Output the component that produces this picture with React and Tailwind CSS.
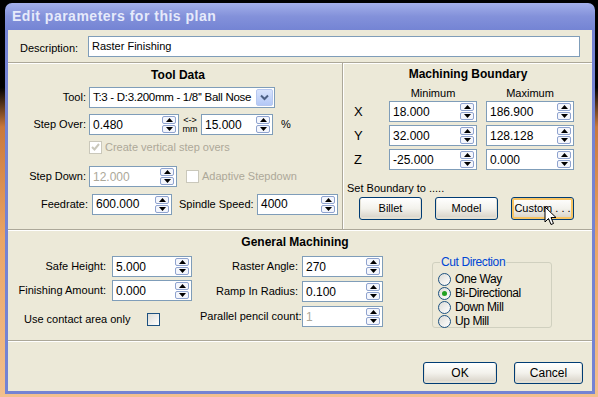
import React from 'react'

const font = "font-['Liberation_Sans',Arial,sans-serif]"

function Tri({ down }) {
  return (
    <svg width="7" height="4" viewBox="0 0 7 4">
      <path d={down ? 'M0 0H7L3.5 4Z' : 'M3.5 0L7 4H0Z'} fill="#000" />
    </svg>
  )
}

function Spinner() {
  return (
    <div className="flex flex-col gap-px mr-[2px]">
      <span className="w-[14px] h-[8px] rounded-[2px] border border-[#8fa3cf] bg-[#f4f6fc] flex items-center justify-center">
        <Tri />
      </span>
      <span className="w-[14px] h-[8px] rounded-[2px] border border-[#8fa3cf] bg-[#f4f6fc] flex items-center justify-center">
        <Tri down />
      </span>
    </div>
  )
}

function SpinBox({ value, className = '', disabled }) {
  return (
    <div className={'h-[21px] shrink-0 flex items-center bg-white border border-[#7f9db9] ' + className}>
      <span className={'flex-1 min-w-0 pl-[3px] text-[12px] ' + (disabled ? 'text-[#aca899]' : 'text-black')}>{value}</span>
      <Spinner />
    </div>
  )
}

function Check({ checked, disabled }) {
  return (
    <span
      className={
        'w-[13px] h-[13px] shrink-0 border flex items-center justify-center ' +
        (disabled
          ? 'border-[#cac8bb] bg-white'
          : 'border-[#1c5180] bg-gradient-to-br from-[#dcdcd7] to-white')
      }
    >
      {checked && (
        <svg width="9" height="8" viewBox="0 0 9 8">
          <path d="M1 4L3.5 6.5L8 1" stroke={disabled ? '#cac8bb' : '#21a121'} strokeWidth="2" fill="none" />
        </svg>
      )}
    </span>
  )
}

function Radio({ checked, label }) {
  return (
    <div className="flex items-center h-[14px] gap-[4px]">
      <span className="w-[13px] h-[13px] rounded-full border border-[#1c5180] bg-gradient-to-br from-[#dcdcd7] to-white flex items-center justify-center">
        {checked && <span className="w-[5px] h-[5px] rounded-full bg-[#21a121]" />}
      </span>
      <span className="text-[12px] tracking-[-0.4px]">{label}</span>
    </div>
  )
}

function XpButton({ children, className = '', hot }) {
  return (
    <div
      className={
        'h-[23px] rounded-[3px] border border-[#003c74] bg-gradient-to-b from-white via-[#f3f2ec] to-[#d6d0c5] flex items-center justify-center ' +
        (hot ? 'shadow-[inset_0_0_0_2px_#f7c463] ' : 'shadow-[inset_0_-1px_0_1px_#e3e0d4] ') +
        className
      }
    >
      {children}
    </div>
  )
}

function Label({ children, className = '' }) {
  return <span className={'text-right shrink-0 ' + className}>{children}</span>
}

export default function App() {
  return (
    <div className={'w-[598px] h-[397px] overflow-hidden pl-[5px] pt-[3px] relative bg-[linear-gradient(to_bottom,#000_0%,#000_22%,#c9783c_32%,#eaa565_60%,#f2c08e_100%)] text-[11px] whitespace-nowrap text-black ' + font}>
      <div className="w-[590px] h-[391px] flex flex-col rounded-t-[7px] overflow-hidden">
        {/* title bar */}
        <div className="h-[27px] shrink-0 flex items-center pl-[7px] bg-gradient-to-b from-[#a3afea] via-[#8391da] to-[#7484d4]">
          <span className="text-[14px] font-bold text-[#e6eafb] tracking-[0.5px]">Edit parameters for this plan</span>
        </div>

        <div className="flex-1 flex flex-col bg-[#ece9d8] border-x-[3px] border-b-[3px] border-[#7483d3]">
          {/* description */}
          <div className="h-[32px] shrink-0 flex pt-[6px] pl-[12px] pr-[12px]">
            <span className="w-[68px] pt-[4px]">Description:</span>
            <div className="flex-1 h-[21px] bg-white border border-[#7f9db9] pl-[3px] flex items-center">
              Raster Finishing
            </div>
          </div>

          {/* tool data + machining boundary */}
          <div className="h-[167px] shrink-0 flex border-t border-[#aca899] shadow-[inset_0_1px_0_#fff]">
            <div className="w-[335px] border-r border-[#aca899] flex flex-col">
              <div className="h-[24px] pt-[3px] pl-[6px] text-center text-[12px] font-bold">Tool Data</div>

              <div className="flex items-center h-[21px]">
                <Label className="w-[78px]">Tool:</Label>
                <div className="ml-[3px] w-[186px] h-[21px] bg-white border border-[#7f9db9] flex items-center overflow-hidden">
                  <span className="flex-1 min-w-0 pl-[3px] text-[11.5px] tracking-[-0.3px] overflow-hidden">T:3 - D:3.200mm - 1/8'' Ball Nose</span>
                  <span className="w-[17px] h-[17px] shrink-0 mr-[1px] rounded-[2px] bg-gradient-to-b from-[#d9e4fd] to-[#b3c8f6] border border-[#b7c8f0] flex items-center justify-center">
                    <svg width="9" height="7" viewBox="0 0 9 7">
                      <path d="M1 1.5L4.5 5L8 1.5" stroke="#4d6185" strokeWidth="2" fill="none" />
                    </svg>
                  </span>
                </div>
              </div>

              <div className="flex items-center h-[21px] mt-[6px]">
                <Label className="w-[78px]">Step Over:</Label>
                <SpinBox value="0.480" className="ml-[3px] w-[90px]" />
                <div className="ml-[4px] w-[14px] flex flex-col items-center leading-[9px] text-[9px]">
                  <span>{'<->'}</span>
                  <span>mm</span>
                </div>
                <SpinBox value="15.000" className="ml-[4px] w-[72px]" />
                <span className="ml-[8px]">%</span>
              </div>

              <div className="flex items-center h-[14px] mt-[5px] pl-[81px] gap-[3px] text-[#aca899]">
                <Check checked disabled />
                <span>Create vertical step overs</span>
              </div>

              <div className="flex items-center h-[21px] mt-[12px]">
                <Label className="w-[78px]">Step Down:</Label>
                <SpinBox value="12.000" disabled className="ml-[3px] w-[88px]" />
                <div className="ml-[9px] flex items-center gap-[3px] text-[#aca899]">
                  <Check disabled />
                  <span>Adaptive Stepdown</span>
                </div>
              </div>

              <div className="flex items-center h-[22px] mt-[6px]">
                <Label className="w-[80px]">Feedrate:</Label>
                <SpinBox value="600.000" className="ml-[4px] w-[80px]" />
                <span className="ml-[7px] w-[71px]">Spindle Speed:</span>
                <SpinBox value="4000" className="ml-[7px] w-[81px]" />
              </div>
            </div>

            <div className="flex-1 border-l border-white flex flex-col">
              <div className="h-[22px] pt-[2px] text-center text-[12px] font-bold">Machining Boundary</div>
              <div className="h-[16px] flex">
                <span className="w-[45px]" />
                <span className="w-[88px] text-center">Minimum</span>
                <span className="w-[9px]" />
                <span className="w-[88px] text-center">Maximum</span>
              </div>
              <div className="flex flex-col gap-[3px]">
                {[
                  ['X', '18.000', '186.900'],
                  ['Y', '32.000', '128.128'],
                  ['Z', '-25.000', '0.000'],
                ].map(([axis, min, max]) => (
                  <div key={axis} className="flex items-center h-[21px]">
                    <span className="w-[45px] pl-[10px] text-[13px]">{axis}</span>
                    <SpinBox value={min} className="w-[88px]" />
                    <SpinBox value={max} className="ml-[9px] w-[88px]" />
                  </div>
                ))}
              </div>
              <div className="mt-[10px] h-[14px] pl-[3px]">Set Boundary to .....</div>
              <div className="mt-[3px] flex pl-[15px] gap-[13px]">
                <XpButton className="w-[63px]">Billet</XpButton>
                <XpButton className="w-[63px]">Model</XpButton>
                <XpButton className="w-[63px]" hot>Custom . . .</XpButton>
              </div>
            </div>
          </div>

          {/* general machining */}
          <div className="h-[111px] shrink-0 flex flex-col border-t border-[#aca899] shadow-[inset_0_1px_0_#fff]">
            <div className="h-[26px] pt-[3px] pr-[10px] text-center text-[12px] font-bold">General Machining</div>
            <div className="flex">
              <div className="w-[184px] flex flex-col">
                <div className="flex items-center h-[21px]">
                  <Label className="w-[98px]">Safe Height:</Label>
                  <SpinBox value="5.000" className="ml-[6px] w-[80px]" />
                </div>
                <div className="flex items-center h-[21px] mt-[3px]">
                  <Label className="w-[98px]">Finishing Amount:</Label>
                  <SpinBox value="0.000" className="ml-[6px] w-[80px]" />
                </div>
                <div className="flex items-center h-[15px] mt-[11px] pl-[16px]">
                  <span className="w-[123px]">Use contact area only</span>
                  <Check />
                </div>
              </div>

              <div className="ml-[8px] flex flex-col gap-[4px]">
                {[
                  ['Raster Angle:', '270', false],
                  ['Ramp In Radius:', '0.100', false],
                  ['Parallel pencil count:', '1', true],
                ].map(([label, value, dis]) => (
                  <div key={label} className="flex items-center h-[21px]">
                    <Label className="w-[98px]">{label}</Label>
                    <SpinBox value={value} disabled={dis} className="ml-[4px] w-[81px]" />
                  </div>
                ))}
              </div>

              <fieldset className="ml-[49px] -mt-[3px] w-[120px] h-[75px] border border-[#d0d0bf] rounded-[3px] pl-[5px]">
                <legend className="ml-[2px] px-[1px] text-[12px] tracking-[-0.4px] text-[#0046d5]">Cut Direction</legend>
                <div className="flex flex-col mt-[1px]">
                  <Radio label="One Way" />
                  <Radio label="Bi-Directional" checked />
                  <Radio label="Down Mill" />
                  <Radio label="Up Mill" />
                </div>
              </fieldset>
            </div>
          </div>

          {/* buttons */}
          <div className="flex-1 flex justify-end items-start pt-[21px] pr-[9px] gap-[17px] border-t border-[#aca899] shadow-[inset_0_1px_0_#fff] text-[12px]">
            <XpButton className="w-[74px] !h-[22px]">OK</XpButton>
            <XpButton className="w-[69px] !h-[22px]">Cancel</XpButton>
          </div>
        </div>
      </div>

      {/* mouse pointer over Custom button */}
      <svg className="absolute left-[544px] top-[206px]" width="13" height="20" viewBox="0 0 13 20">
        <path d="M1 1V16L4.5 12.5L7 18.5L9.5 17.5L7 11.5H12Z" fill="#fff" stroke="#000" strokeWidth="1" strokeLinejoin="round" />
      </svg>
    </div>
  )
}
